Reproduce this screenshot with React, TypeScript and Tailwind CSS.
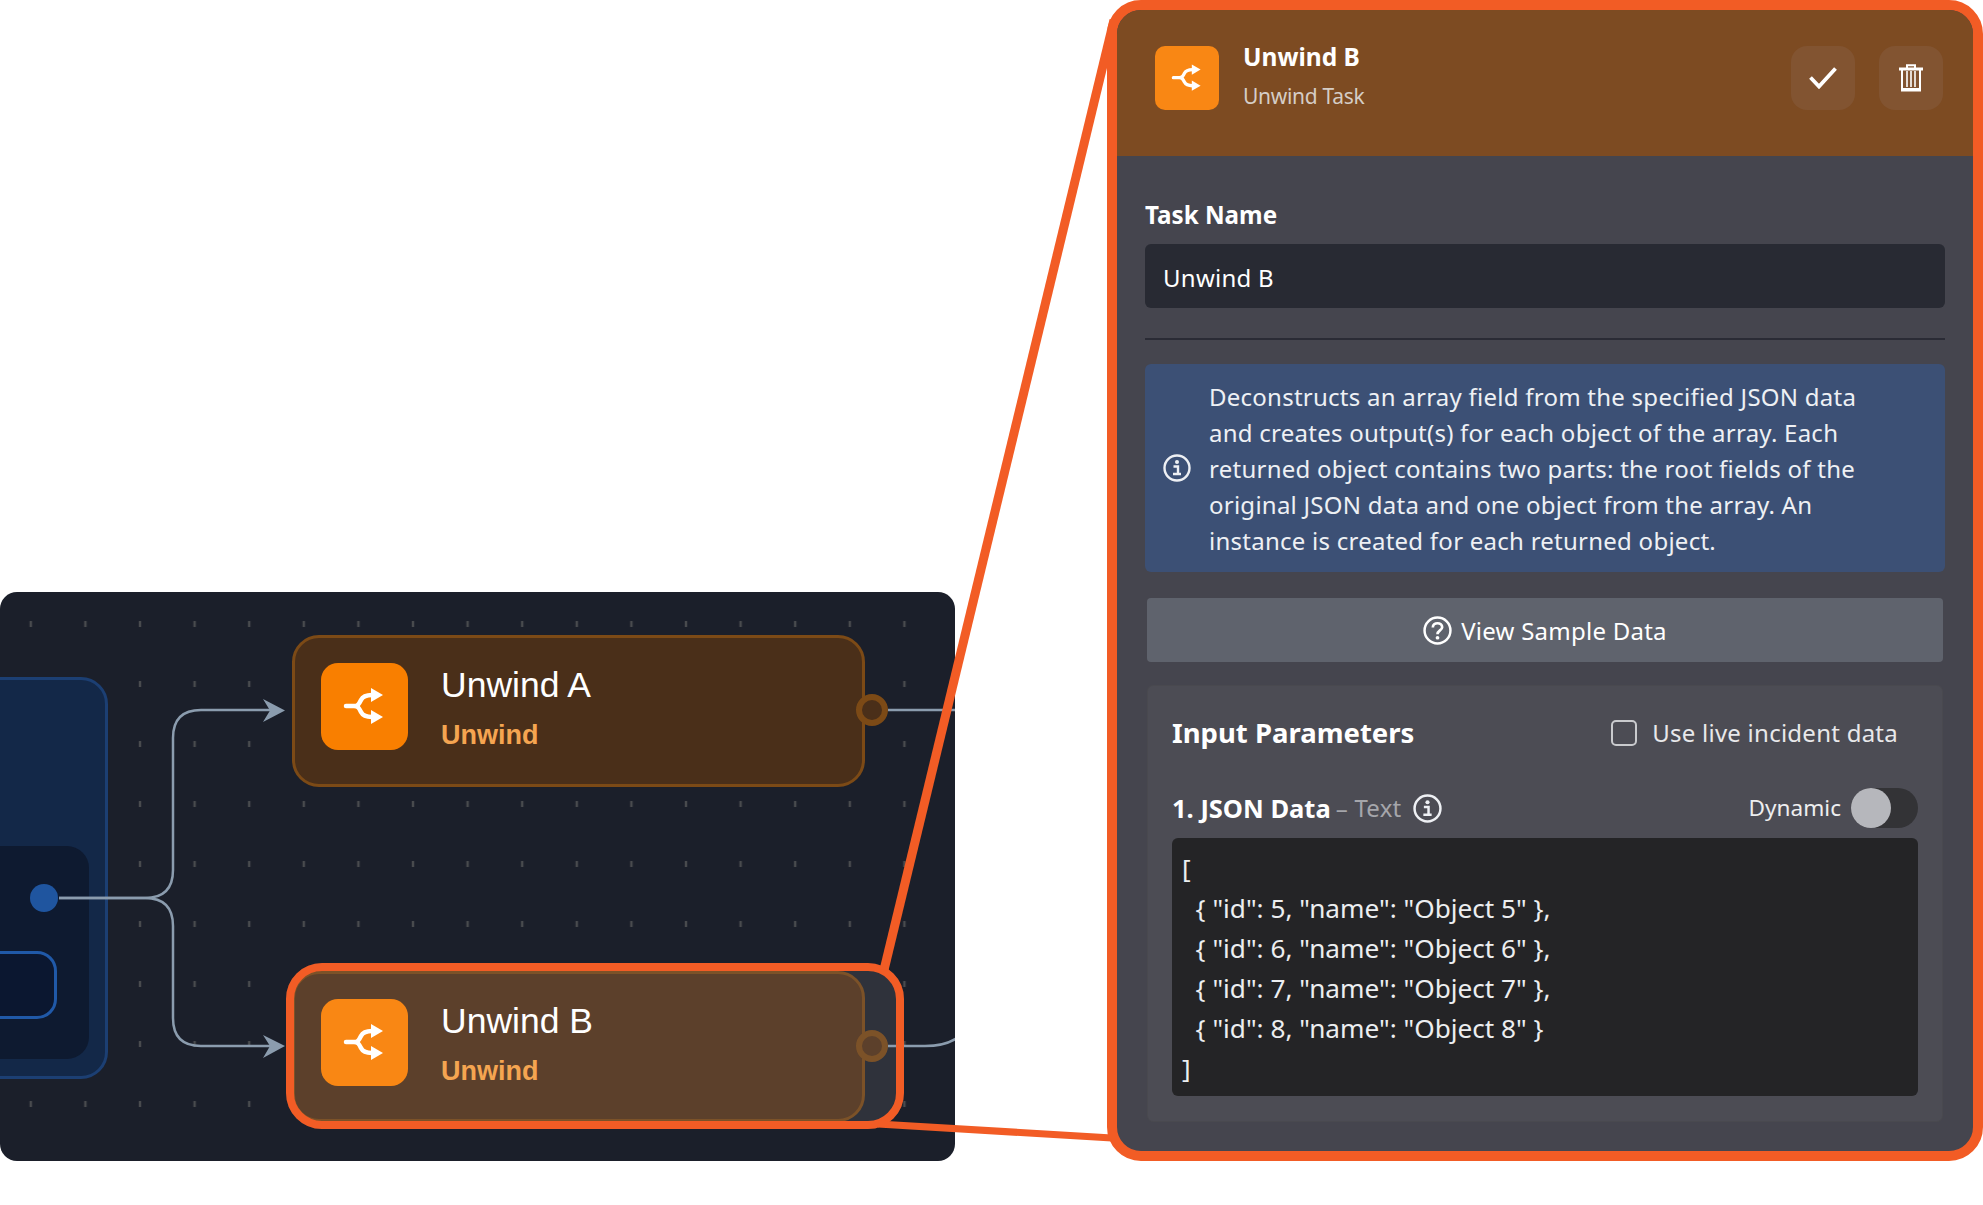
import { Fragment } from "react";

function UnwindIcon({ size }: { size: number }) {
  return (
    <svg width={size} height={size} viewBox="0 0 87 87" fill="none">
      <path
        d="M25 43H33C37 43 38 41 40 37C42 33 45 32 51 32M33 43C37 43 38 45 40 49C42 53 45 54 51 54"
        stroke="white"
        strokeWidth="4.5"
        strokeLinecap="round"
      />
      <polygon points="50,25 62,32 50,39" fill="white" />
      <polygon points="50,47 62,54 50,61" fill="white" />
    </svg>
  );
}

function InfoIcon({ size }: { size: number }) {
  return (
    <svg width={size} height={size} viewBox="0 0 28 28" fill="none">
      <circle cx="14" cy="14" r="12.5" stroke="#eef0f4" strokeWidth="2.4" />
      <circle cx="14" cy="8" r="2" fill="#eef0f4" />
      <path d="M10.5 12.5H15V19.5M10 20H18" stroke="#eef0f4" strokeWidth="2.4" />
    </svg>
  );
}

function HelpIcon() {
  return (
    <svg width="29" height="29" viewBox="0 0 28 28" fill="none">
      <circle cx="14" cy="14" r="12.5" stroke="white" strokeWidth="2.4" />
      <path
        d="M9.5 11C9.5 8.5 11.5 7 14 7C16.5 7 18.5 8.5 18.5 10.8C18.5 13.8 14 14 14 17.5"
        stroke="white"
        strokeWidth="2.6"
      />
      <circle cx="14" cy="21" r="1.8" fill="white" />
    </svg>
  );
}

function TrashIcon() {
  return (
    <svg width="24" height="28" viewBox="0 0 24 28" fill="none" stroke="white">
      <path d="M0 5H24" strokeWidth="3" />
      <path d="M8 4V1.2H16V4" strokeWidth="2" />
      <path d="M3 6V26.5H21V6" strokeWidth="2" />
      <path d="M8 7V23M12 7V23M16 7V23" strokeWidth="1.6" />
      <path d="M3 25.5H21" strokeWidth="3" />
    </svg>
  );
}

function FlowNode({ name, className, iconClass }: { name: string; className: string; iconClass: string }) {
  return (
    <div className={`absolute left-[292px] w-[573px] rounded-[27px] border-[3px] flex items-start pl-[26px] pt-[25px] ${className}`}>
      <div className={`w-[87px] h-[87px] rounded-[17px] flex items-center justify-center shrink-0 ${iconClass}`}>
        <UnwindIcon size={87} />
      </div>
      <div className="ml-[33px] flex flex-col">
        <div className="text-[35.5px] leading-[44px] text-white">{name}</div>
        <div className="text-[27px] leading-[32px] mt-[12px] font-bold text-[#f5a551]">Unwind</div>
      </div>
    </div>
  );
}

function Canvas() {
  return (
    <div className="relative w-[955px] h-[569px] rounded-[17px] overflow-hidden bg-[#1b1f2a] font-['Liberation_Sans',sans-serif]">
      <svg className="absolute inset-0" width="955" height="569">
        <defs>
          <pattern id="dots" width="54.6" height="60" patternUnits="userSpaceOnUse">
            <rect x="29.6" y="29" width="2.4" height="6" fill="#494b4e" />
          </pattern>
        </defs>
        <rect width="955" height="569" fill="url(#dots)" />
      </svg>

      {/* source node, cut off by the left edge */}
      <div className="absolute left-[-60px] top-[85px] w-[168px] h-[402px] rounded-[27px] border-[3px] border-[#1c3f73] bg-[#132848]">
        <div className="absolute left-0 top-[166px] w-[146px] h-[213px] rounded-[22px] bg-[#0e1a30]" />
        <div className="absolute left-0 top-[271px] w-[114px] h-[68px] rounded-[20px] border-[3px] border-[#2059a8] bg-[#0b1730]" />
        <div className="absolute left-[87px] top-[204px] w-[28px] h-[28px] rounded-full bg-[#1f559f]" />
      </div>

      <div className="absolute left-[286px] top-[371px] w-[618px] h-[166px] rounded-[36px] bg-[#2f323b]" />

      <svg className="absolute inset-0" width="955" height="569" fill="none" stroke="#8b9cae" strokeWidth="2.5">
        <path d="M59 306H145Q173 306 173 278V146Q173 118 201 118H272" />
        <path d="M59 306H145Q173 306 173 334V426Q173 454 201 454H272" />
        <path d="M888 118H955" />
        <path d="M888 454H925Q945 454 957 446" />
        <polygon points="263,107 285,118.5 263,130 270,118.5" fill="#8b9cae" stroke="none" />
        <polygon points="263,443 285,454 263,466 270,454" fill="#8b9cae" stroke="none" />
      </svg>

      <FlowNode name="Unwind A" className="top-[43px] h-[152px] bg-[#4a2f19] border-[#7c4a16]" iconClass="bg-[#f97f00]" />
      <FlowNode name="Unwind B" className="top-[379px] h-[151px] bg-[#5c402b] border-[#7c5228]" iconClass="bg-[#f98714]" />

      <div className="absolute left-[856px] top-[102px] w-[32px] h-[32px] rounded-full border-[6px] border-[#7c4a16] bg-[#4a2f19]" />
      <div className="absolute left-[856px] top-[438px] w-[32px] h-[32px] rounded-full border-[6px] border-[#7c5228] bg-[#5c402b]" />

      <div className="absolute left-[286px] top-[371px] w-[618px] h-[166px] rounded-[36px] border-[8px] border-[#f25c25]" />
    </div>
  );
}

const description = [
  "Deconstructs an array field from the specified JSON data",
  "and creates output(s) for each object of the array. Each",
  "returned object contains two parts: the root fields of the",
  "original JSON data and one object from the array. An",
  "instance is created for each returned object.",
];

const sampleJson = `[
  { "id": 5, "name": "Object 5" },
  { "id": 6, "name": "Object 6" },
  { "id": 7, "name": "Object 7" },
  { "id": 8, "name": "Object 8" }
]`;

function Panel() {
  return (
    <div className="relative z-20 w-[876px] h-[1161px] rounded-[34px] border-[10px] border-[#f25c25] bg-[#45454e] overflow-hidden font-['Noto_Sans',sans-serif] text-[24px] tracking-[0.25px] text-white">
      <div className="h-[146px] bg-[#7d4b22] flex items-start pl-[38px] pr-[30px] pt-[36px]">
        <div className="w-[64px] h-[64px] rounded-[10px] bg-[#f98714] flex items-center justify-center">
          <UnwindIcon size={64} />
        </div>
        <div className="ml-[24px] flex flex-col flex-1">
          <div className="text-[24.5px] leading-[30px] -mt-[4px] font-bold tracking-normal">Unwind B</div>
          <div className="text-[21px] leading-[30px] mt-[9px] tracking-[-0.3px] text-[#d5cdc6]">Unwind Task</div>
        </div>
        <button className="w-[64px] h-[64px] rounded-[16px] bg-[#825431] flex items-center justify-center">
          <svg width="28" height="22" viewBox="0 0 28 22" fill="none">
            <path d="M1.5 10.5L10 19.5L26.5 1.5" stroke="white" strokeWidth="3.8" />
          </svg>
        </button>
        <button className="ml-[24px] w-[64px] h-[64px] rounded-[16px] bg-[#825431] flex items-center justify-center">
          <TrashIcon />
        </button>
      </div>

      <div className="pl-[28px] pr-[28px] pt-[44px] flex flex-col">
        <div className="text-[24.2px] leading-[30px] font-bold tracking-normal">Task Name</div>
        <div className="mt-[14px] h-[64px] rounded-[6px] bg-[#282a33] flex items-center pl-[18px]">
          <span className="mt-[4px]">Unwind B</span>
        </div>
        <div className="mt-[30px] h-[2px] bg-[#2a2b35]" />

        <div className="mt-[24px] h-[208px] rounded-[6px] bg-[#3c5075] flex items-center pl-[18px]">
          <InfoIcon size={28} />
          <div className="ml-[18px] mt-[1px] leading-[36px] text-[#eef0f4] whitespace-nowrap">
            {description.map((line) => (
              <Fragment key={line}>
                {line}
                <br />
              </Fragment>
            ))}
          </div>
        </div>

        <button className="mt-[26px] mx-[2px] h-[64px] rounded-[4px] bg-[#5f636d] flex items-center justify-center gap-[9px]">
          <HelpIcon />
          <span className="mt-[1px]">View Sample Data</span>
        </button>

        <div className="mt-[23px] mx-[2px] h-[437px] rounded-[6px] bg-[#4c4c54] border border-[#49494f] px-[24px] flex flex-col">
          <div className="h-[93px] flex items-center justify-between pr-[20px]">
            <span className="text-[27.5px] font-bold tracking-normal">Input Parameters</span>
            <label className="flex items-center gap-[15px] text-[#e8e8ea]">
              <span className="w-[26px] h-[26px] rounded-[5px] border-2 border-[#c9cacd]" />
              Use live incident data
            </label>
          </div>
          <div className="h-[58px] flex items-center">
            <span className="text-[25.5px] font-bold tracking-normal">1. JSON Data</span>
            <span className="ml-[5px] text-[#a5a6ab]">– Text</span>
            <span className="ml-[11px]">
              <InfoIcon size={29} />
            </span>
            <span className="ml-auto text-[22.6px] tracking-normal text-[#eeeeef]">Dynamic</span>
            <span className="ml-[10px] w-[67px] h-[40px] rounded-full bg-[#333336] flex">
              <span className="w-[40px] h-[40px] rounded-full bg-[#b6b7bc]" />
            </span>
          </div>
          <pre className="mt-[1px] h-[258px] rounded-[6px] bg-[#242426] pl-[10px] pt-[10px] text-[26.2px] tracking-normal leading-[40px] text-[#eceef0] font-['Noto_Sans',sans-serif]">
            {sampleJson}
          </pre>
        </div>
      </div>
    </div>
  );
}

export default function App() {
  return (
    <div className="relative w-[1983px] h-[1205px] bg-white overflow-hidden flex justify-between items-start">
      <div className="pt-[592px]">
        <Canvas />
      </div>
      {/* callout lines from the selected node to the panel */}
      <svg className="absolute inset-0 z-10" width="1983" height="1205">
        <path d="M884 970L1114 20" stroke="#f25c25" strokeWidth="9" />
        <path d="M878 1124L1112 1138" stroke="#f25c25" strokeWidth="7" />
      </svg>
      <Panel />
    </div>
  );
}
